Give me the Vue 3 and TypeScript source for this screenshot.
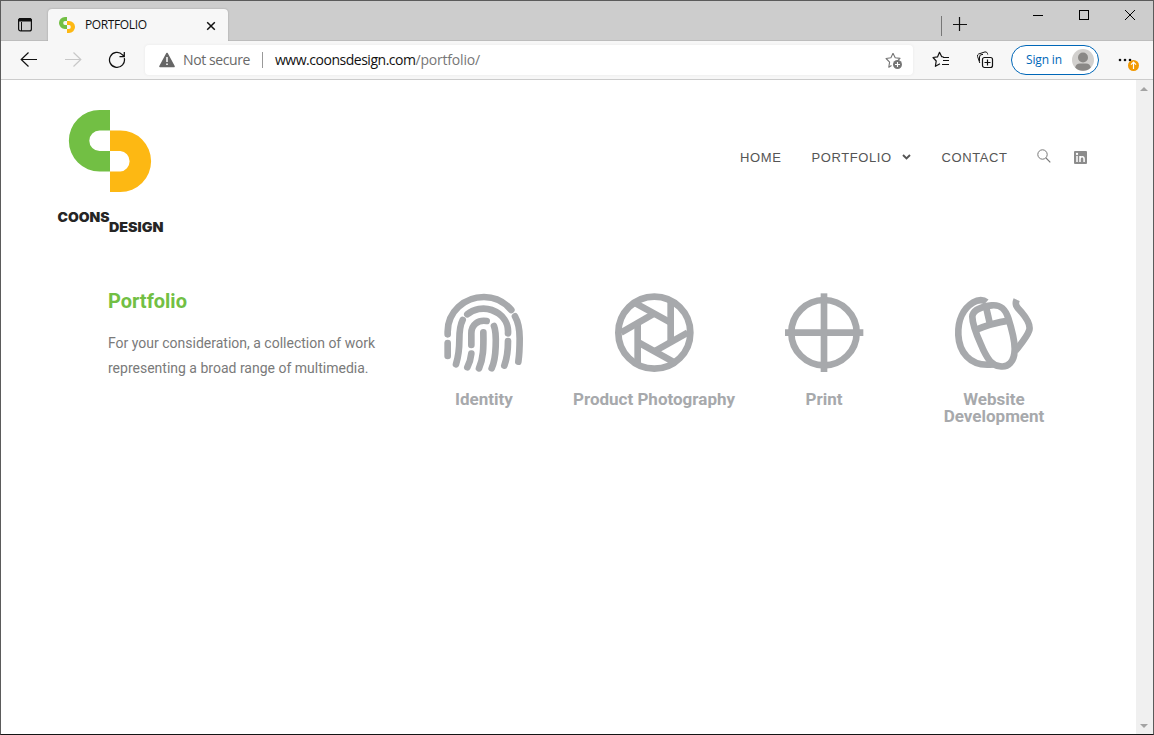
<script setup lang="ts">
interface Category {
  label: string
  paths: string[]
  viewBox?: string
  circle?: { cx: number; cy: number; r: number }
  rounded?: boolean
}

const categories: Category[] = [
  {
    label: 'Identity',
    rounded: true,
    paths: [
      'M38 148V140C38 80 88 36 147 36C180 36 208 50 229 75',
      'M240 94C252 115 254 135 254 160C254 190 253 210 250 230',
      'M38 174V213',
      'M83 105C74 122 73 140 73 165C73 195 70 215 63 238',
      'M97 88C115 72 145 66 170 75C205 88 221 115 219 145',
      'M219 168C219 200 216 220 208 242',
      'M109 180V145C109 118 130 104 155 108',
      'M109 206C107 225 103 235 97 247',
      'M145 142C146 190 145 220 132 250',
      'M177 123C184 140 183 160 182 185C181 215 177 235 170 250',
    ],
  },
  {
    label: 'Product Photography',
    circle: { cx: 148, cy: 143, r: 108 },
    paths: [
      'M88 53L197 113',
      'M197 48V171',
      'M248 143L147 200',
      'M208 232L98 171',
      'M98 240V113',
      'M48 143L147 86',
    ],
  },
  {
    label: 'Print',
    circle: { cx: 147, cy: 143, r: 98 },
    paths: ['M30 143H265', 'M147 25V261'],
  },
  {
    label: 'Website Development',
    viewBox: '15 0 300 288',
    paths: [
      'M139 51C131 44 115 43 100 52C70 70 53 105 55 150C57 195 85 248 160 238',
      'M97 95C98 75 125 65 155 61C185 58 197 75 205 100C216 135 225 170 224 195C223 230 205 248 180 244C155 240 145 225 130 195C115 160 97 125 97 95Z',
      'M105 136Q150 115 210 106',
      'M136 56L150 118',
      'M230 44C224 58 228 65 245 82C262 102 272 118 268 135C262 155 240 180 226 198',
    ],
  },
]
</script>

<template>
  <div class="window">
    <div class="tabbar">
      <svg class="tabs-icon" viewBox="0 0 16 16"><rect x="1.6" y="1.6" width="12.8" height="12.3" rx="2" fill="none" stroke="#111" stroke-width="1.2" /><path d="M1.5 4V3Q1.5 1.5 3 1.5H13Q14.500 1.500 14.500 3V4Z" fill="#111" stroke="#111" /><path d="M4.500 5V14" stroke="#111" /></svg>
      <div class="tab">
        <svg class="favicon" viewBox="0 0 82 82"><path d="M41 0H30.700A30.700 30.700 0 0 0 30.700 61.500H41V41H30.700A10.300 10.300 0 0 1 30.700 20.500H41Z" fill="#72bf44" /><path d="M41 20.500H51.300A30.700 30.700 0 0 1 51.300 82H41V61.500H51.300A10.300 10.300 0 0 0 51.300 41H41Z" fill="#fdb813" /></svg>
        <span class="tab-title">PORTFOLIO</span>
        <svg class="tab-close" viewBox="0 0 10 10"><path d="M1.200 1.200L8.800 8.800M8.800 1.200L1.200 8.800" stroke="#111" stroke-width="1.500" /></svg>
      </div>
      <div class="spacer"></div>
      <i class="tab-divider"></i>
      <svg class="new-tab" viewBox="0 0 14 14"><path d="M0 7.500H14M6.500 0V14" stroke="#111" stroke-width="1.200" /></svg>
      <svg class="controls" viewBox="0 0 104 14"><path d="M0 6.500H10" stroke="#000" /><rect x="46.500" y="1.500" width="9" height="9" fill="none" stroke="#000" /><path d="M92 1L102 11M102 1L92 11" stroke="#000" /></svg>
    </div>

    <div class="toolbar">
      <svg class="back" viewBox="0 0 18 16"><path d="M17 7.500H1M8.500 .5L1.200 7.500L8.500 14.500" fill="none" stroke="#111" stroke-width="1.200" /></svg>
      <svg class="forward" viewBox="0 0 18 16"><path d="M1 7.500H17M9.500 .5L16.800 7.500L9.500 14.500" fill="none" stroke="#c8c8c8" stroke-width="1.200" /></svg>
      <svg class="reload" viewBox="0 0 18 18"><path d="M16.300 7.200A7.500 7.500 0 1 1 14.500 3.800L16.200 5.500M16.300 1V5.600H11.500" fill="none" stroke="#111" stroke-width="1.250" /></svg>
      <div class="address">
        <svg class="warning" viewBox="0 0 16 16"><path d="M8 1.500L15 14.500H1Z" fill="#666" stroke="#666" stroke-width="1.600" stroke-linejoin="round" /><path d="M8 5V10M8 11.500V13" stroke="#fff" stroke-width="1.500" /></svg>
        <span class="insecure">Not secure</span>
        <i class="address-divider"></i>
        <span class="url">www.coonsdesign.com<span class="path">/portfolio/</span></span>
        <svg class="add-fav" viewBox="0 0 18 18"><path d="M8 1.300L10.200 5.700L15 6.400L12 9.400M6.500 13.500L3.800 15.200L4.600 10.100L1.100 6.500L5.900 5.700L8 1.300" fill="none" stroke="#757575" stroke-width="1.100" stroke-linejoin="round" /><circle cx="12.500" cy="12.500" r="4.500" fill="#757575" /><path d="M10 12.500H15M12.500 10V15" stroke="#fff" stroke-width="1.100" /></svg>
      </div>
      <svg class="favorites" viewBox="0 0 18 18"><path d="M11.500 5.900L9.600 5.600L7.500 1.300L5.500 5.900L1 6.500L4.200 10L3.400 15.300L8 12.800" fill="none" stroke="#111" stroke-width="1.200" stroke-linejoin="round" /><path d="M11 6.500H17M11 9.500H17M10 13.500H17" stroke="#111" stroke-width="1.200" /></svg>
      <svg class="collections" viewBox="0 0 18 18"><path d="M3.800 12L1.600 5.500Q1 3.800 2.600 3L9 .9Q10.800 .6 11.500 2.500L11.700 3.500M3.500 10V6Q3.500 3.500 6 3.500H7" fill="none" stroke="#111" stroke-width="1" /><rect x="6.500" y="6.500" width="10" height="10" rx="2" fill="#f7f7f7" stroke="#111" stroke-width="1.200" /><path d="M8.500 11.500H14.500M11.500 8.500V14.500" stroke="#111" stroke-width="1.200" /></svg>
      <div class="signin">
        <span>Sign in</span>
        <svg viewBox="0 0 22 22"><circle cx="11" cy="11" r="11" fill="#d2d0ce" /><circle cx="11" cy="8.500" r="5" fill="#8a8886" /><path d="M3.200 18.500Q4 14.500 8 14.500H14Q18 14.500 18.800 18.500A11 11 0 0 1 3.200 18.500Z" fill="#8a8886" /></svg>
      </div>
      <svg class="more" viewBox="0 0 22 16"><g fill="#111"><circle cx="2" cy="5" r="1.300" /><circle cx="7" cy="5" r="1.300" /><circle cx="12" cy="5" r="1.300" /></g><circle cx="15.500" cy="10.500" r="5.500" fill="#f29900" /><path d="M15.500 14V7.500M13 9.700L15.500 7.200L18 9.700" fill="none" stroke="#fff" stroke-width="1.200" /></svg>
    </div>

    <div class="viewport">
      <main class="page">
        <header class="site-header">
          <svg class="logo" viewBox="0 0 110 130">
            <path d="M54 4H43.600A30.750 30.750 0 0 0 43.600 65.500H54V45H43.600A10.300 10.300 0 0 1 43.600 24.400H54Z" fill="#72bf44" />
            <path d="M54 24.400H64.300A30.750 30.750 0 0 1 64.300 86H54V65.500H64.300A10.300 10.300 0 0 0 64.300 45H54Z" fill="#fdb813" />
            <text x="1.500" y="116" textLength="52" lengthAdjust="spacingAndGlyphs">COONS</text>
            <text x="53" y="126" textLength="54.500" lengthAdjust="spacingAndGlyphs">DESIGN</text>
          </svg>
          <nav>
            <a class="home">HOME</a>
            <a class="portfolio">PORTFOLIO</a>
            <svg class="chevron" viewBox="0 0 9 6"><path d="M1 1L4.500 4.500L8 1" fill="none" stroke="#555" stroke-width="1.900" /></svg>
            <a class="contact">CONTACT</a>
            <svg class="search" viewBox="0 0 14 14"><circle cx="5.500" cy="5.500" r="4.700" fill="none" stroke="#777" /><path d="M9 9L13.300 13.300" stroke="#777" stroke-width="1.100" /></svg>
            <svg class="linkedin" viewBox="0 0 13 13"><rect width="13" height="13" rx="1" fill="#8c8c8c" /><circle cx="3" cy="3" r="1.150" fill="#fff" /><path d="M3 5V11M6 11V5M6 8Q6 5.800 8.200 5.800Q10.100 5.800 10.100 8V11" fill="none" stroke="#fff" stroke-width="1.500" /></svg>
          </nav>
        </header>
        <section class="content">
          <div class="intro">
            <h1>Portfolio</h1>
            <p>For your consideration, a collection of work<br>representing a broad range of multimedia.</p>
          </div>
          <div class="categories">
            <div v-for="c in categories" :key="c.label" class="category">
              <svg :viewBox="c.viewBox ?? '0 0 300 288'" :class="{ rounded: c.rounded }">
                <circle v-if="c.circle" v-bind="c.circle" />
                <path v-for="d in c.paths" :key="d" :d="d" />
              </svg>
              <h2>{{ c.label }}</h2>
            </div>
          </div>
        </section>
      </main>
      <div class="scrollbar">
        <svg viewBox="0 0 8 4"><path d="M0 4L4 0L8 4Z" fill="#a3a3a3" /></svg>
        <svg viewBox="0 0 8 4"><path d="M0 0L4 4L8 0Z" fill="#a3a3a3" /></svg>
      </div>
    </div>
  </div>
</template>

<style>
body { overflow: hidden; background: #fff; }
</style>

<style scoped>
* { box-sizing: border-box; }
svg { display: block; flex: none; }
.window { width: 1154px; height: 735px; display: flex; flex-direction: column; border: 1px solid #5b5b5b; border-bottom-color: #151515; font-family: "Open Sans", "Noto Sans", sans-serif; white-space: nowrap; }
.tabbar { height: 40px; flex: none; display: flex; background: #cdcdcd; border-bottom: 1px solid #bdbdbd; }
.tabs-icon { width: 16px; height: 16px; margin: 16px 0 0 16px; }
.tab { width: 180px; height: 32px; margin: 8px 0 0 15px; background: #f7f7f7; border-radius: 4px 4px 0 0; box-shadow: 0 0 2px #999; clip-path: inset(-3px -3px 0); display: flex; align-items: center; }
.favicon { width: 16px; height: 16px; margin-left: 11px; }
.tab-title { width: 121px; margin: -2px 0 0 10px; font-size: 12px; letter-spacing: -.38px; color: #111; }
.tab-close { width: 10px; height: 10px; margin-top: 1px; }
.spacer { flex: 1; }
.tab-divider { width: 1px; height: 20px; margin: 15px 11px 0 0; background: #777; }
.new-tab { width: 14px; height: 14px; margin: 16px 66px 0 0; }
.controls { width: 104px; height: 14px; margin: 8px 16px 0 0; }
.toolbar { height: 39px; flex: none; display: flex; align-items: center; background: #f7f7f7; border-bottom: 1px solid #ccc; }
.back { width: 18px; height: 16px; margin-left: 19px; }
.forward { width: 18px; height: 16px; margin-left: 26px; }
.reload { width: 18px; height: 18px; margin-left: 26px; }
.address { width: 768px; height: 30px; margin-left: 19px; border-radius: 4px; background: #fff; box-shadow: 0 0 3px #e8e8e8; display: flex; align-items: center; font-size: 14px; }
.warning { width: 16px; height: 16px; margin-left: 14px; }
.insecure { width: 79px; margin: -1px 0 0 8px; color: #696969; letter-spacing: -.4px; }
.address-divider { width: 1px; height: 16px; background: #999; }
.url { width: 610px; margin: -1px 0 0 12px; color: #111; letter-spacing: -.48px; }
.path { color: #777; letter-spacing: -.2px; }
.add-fav { width: 18px; height: 18px; margin-top: 2px; }
.favorites { width: 18px; height: 18px; margin-left: 19px; }
.collections { width: 18px; height: 18px; margin-left: 26px; }
.signin { width: 88px; height: 30px; margin-left: 17px; padding-left: 14px; border: 1px solid #0067b8; border-radius: 15px; background: #fff; color: #0067b8; display: flex; align-items: center; font-size: 12px; }
.signin span { width: 46px; margin-top: -1px; letter-spacing: -.15px; }
.signin svg { width: 22px; height: 22px; }
.more { width: 22px; height: 16px; margin: 6px 0 0 19px; }
.viewport { flex: 1; display: flex; background: #fff; }
.page { flex: 1; font-family: Roboto, sans-serif; }
.site-header { height: 181px; display: flex; }
.logo { width: 110px; height: 130px; margin: 26px 0 0 55px; }
.logo text { font: 900 13px Inter, sans-serif; fill: #252525; }
nav { height: 20px; margin: 67px 0 0 574px; display: flex; align-items: center; color: #555; font-family: "Liberation Sans", Arial, sans-serif; font-size: 13px; letter-spacing: .6px; }
.home { width: 71.500px; }
.portfolio { width: 90.500px; }
.chevron { width: 9px; height: 6px; }
.contact { width: 95px; margin-left: 30.500px; }
.search { width: 14px; height: 14px; margin-top: -2px; }
.linkedin { width: 13px; height: 13px; margin: 1px 0 0 23px; }
.content { display: flex; padding-left: 107px; }
.intro { width: 291px; padding-top: 28px; }
h1 { margin: 0; font-size: 20px; line-height: 24px; font-weight: 700; color: #72bf44; }
p { margin: 18px 0 0; font-size: 14px; line-height: 25px; color: #7a7a7a; }
.categories { display: grid; grid-template-columns: repeat(4, 170px); padding-top: 24px; }
.category { display: flex; flex-direction: column; align-items: center; }
.category svg { width: 100px; height: 96px; margin-left: 2px; fill: none; stroke: #a7a9ac; stroke-width: 20; }
.category svg.rounded { stroke-linecap: round; }
h2 { width: 170px; margin: 10px 0 0; padding: 0 2px; font-size: 17px; line-height: 17px; font-weight: 700; text-align: center; color: #a7a9ac; white-space: normal; }
.category:last-child h2 { padding: 0 25px; }
.scrollbar { width: 17px; background: #f0f0f0; padding: 7px 4px 6px; display: flex; flex-direction: column; justify-content: space-between; }
.scrollbar svg { width: 8px; height: 4px; }
</style>
